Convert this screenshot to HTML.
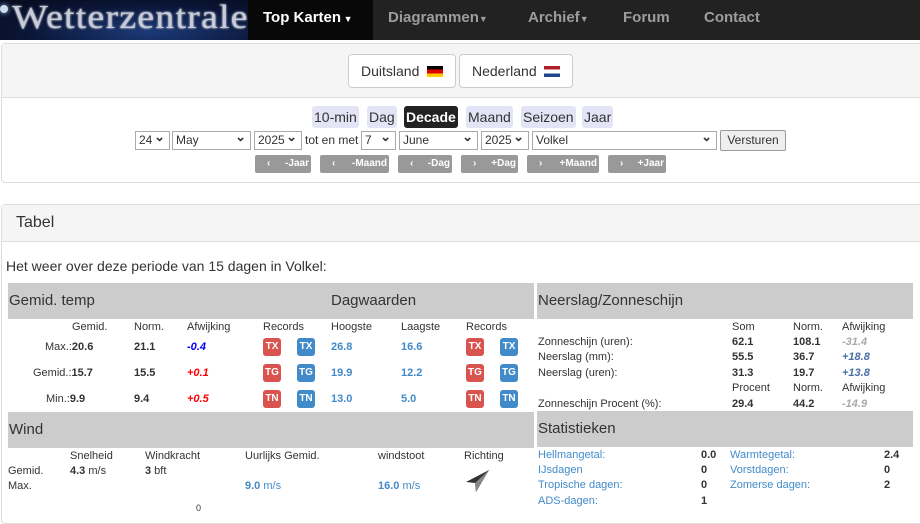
<!DOCTYPE html>
<html><head><meta charset="utf-8">
<style>
*{margin:0;padding:0;box-sizing:border-box}
body{width:920px;height:509px;overflow:hidden;background:#fff;font-family:"Liberation Sans",sans-serif;color:#333;position:relative;font-size:11px}
.a{position:absolute;white-space:nowrap;line-height:16px}
.b{font-weight:bold}
.bl{color:#428bca}
.bar{position:absolute;background:#ccc;font-size:15px;line-height:35px;padding-left:1px;color:#333}
.bd{position:absolute;width:18px;height:18px;border-radius:3px;color:#fff;font-weight:bold;font-size:10px;text-align:center;line-height:18px}
.r{background:#d9534f}.u{background:#428bca}
.sel{position:absolute;height:19px;border:1px solid #aaa;background:#fff;font-size:12px;line-height:17px;padding-left:3px;color:#333}
.sel:after{content:"⌄";position:absolute;right:4px;top:-4px;font-size:13px;font-weight:bold}
.pill{position:absolute;top:106px;height:22px;line-height:22px;font-size:14px;background:#e4e4f7;border-radius:3px;padding:0 2px;color:#333}
.nb{position:absolute;top:155px;height:18px;background:#999;border-radius:2px;color:#fff;font-size:10px;font-weight:bold;line-height:18px}
</style></head><body>
<!-- navbar -->
<div style="position:absolute;left:0;top:0;width:920px;height:40px;background:#222"></div>
<div style="position:absolute;left:0;top:0;width:248px;height:40px;background:radial-gradient(ellipse at 60% 80%,#1c3a78,#0a1535 60%,#050a1c);overflow:hidden">
<div class="a" style="left:12px;top:-2px;font-family:'Liberation Serif',serif;font-size:34px;line-height:40px;color:#c8ccd8;letter-spacing:1px;transform:scaleX(1.12);transform-origin:left;text-shadow:0 0 2px #fff">Wetterzentrale</div>
</div>
<div style="position:absolute;left:0;top:5px;width:8px;height:8px;border-radius:50%;background:#cde;box-shadow:0 0 6px #9cf"></div>
<div style="position:absolute;left:248px;top:0;width:125px;height:40px;background:#080808"></div>
<div class="a b" style="left:263px;top:8px;font-size:15px;line-height:20px;color:#fff">Top Karten<span style="font-size:9px"> ▼</span></div>
<div class="a b" style="left:388px;top:8px;font-size:15px;line-height:20px;color:#9d9d9d">Diagrammen<span style="font-size:9px">▼</span></div>
<div class="a b" style="left:528px;top:8px;font-size:15px;line-height:20px;color:#9d9d9d">Archief<span style="font-size:9px">▼</span></div>
<div class="a b" style="left:623px;top:8px;font-size:15px;line-height:20px;color:#9d9d9d">Forum</div>
<div class="a b" style="left:704px;top:8px;font-size:15px;line-height:20px;color:#9d9d9d">Contact</div>

<!-- top panel -->
<div style="position:absolute;left:1px;top:43px;width:925px;height:140px;border:1px solid #ddd;border-radius:4px;background:#fff"></div>
<div style="position:absolute;left:2px;top:44px;width:920px;height:54px;background:#f5f5f5;border-bottom:1px solid #ddd"></div>
<div style="position:absolute;left:348px;top:54px;width:108px;height:34px;border:1px solid #ccc;border-radius:4px;background:#fff"></div>
<div class="a" style="left:361px;top:62px;font-size:14px;line-height:18px">Duitsland</div>
<div style="position:absolute;left:427px;top:66px;width:16px;height:11px;background:linear-gradient(#000 33%,#d00 33% 66%,#fc0 66%)"></div>
<div style="position:absolute;left:459px;top:54px;width:114px;height:34px;border:1px solid #ccc;border-radius:4px;background:#fff"></div>
<div class="a" style="left:472px;top:62px;font-size:14px;line-height:18px">Nederland</div>
<div style="position:absolute;left:544px;top:66px;width:16px;height:11px;background:linear-gradient(#ae1c28 33%,#fff 33% 66%,#21468b 66%)"></div>

<div class="pill" style="left:312px">10-min</div>
<div class="pill" style="left:367px">Dag</div>
<div class="pill b" style="left:404px;background:#222;color:#fff">Decade</div>
<div class="pill" style="left:466px">Maand</div>
<div class="pill" style="left:521px">Seizoen</div>
<div class="pill" style="left:582px">Jaar</div>

<div class="sel" style="left:135px;top:131px;width:35px">24</div>
<div class="sel" style="left:172px;top:131px;width:79px">May</div>
<div class="sel" style="left:254px;top:131px;width:48px">2025</div>
<div class="a" style="left:305px;top:132px;font-size:12px">tot en met</div>
<div class="sel" style="left:361px;top:131px;width:35px">7</div>
<div class="sel" style="left:399px;top:131px;width:79px">June</div>
<div class="sel" style="left:481px;top:131px;width:48px">2025</div>
<div class="sel" style="left:532px;top:131px;width:185px">Volkel</div>
<div style="position:absolute;left:720px;top:130px;width:66px;height:21px;border:1px solid #999;border-radius:2px;background:#eee;font-size:12px;line-height:19px;text-align:center">Versturen</div>

<div class="nb" style="left:255px;width:56px"><span style="position:absolute;left:12px">‹</span><span style="position:absolute;right:2px">-Jaar</span></div>
<div class="nb" style="left:320px;width:69px"><span style="position:absolute;left:12px">‹</span><span style="position:absolute;right:2px">-Maand</span></div>
<div class="nb" style="left:398px;width:54px"><span style="position:absolute;left:12px">‹</span><span style="position:absolute;right:2px">-Dag</span></div>
<div class="nb" style="left:461px;width:57px"><span style="position:absolute;left:12px">›</span><span style="position:absolute;right:2px">+Dag</span></div>
<div class="nb" style="left:527px;width:72px"><span style="position:absolute;left:12px">›</span><span style="position:absolute;right:2px">+Maand</span></div>
<div class="nb" style="left:608px;width:58px"><span style="position:absolute;left:12px">›</span><span style="position:absolute;right:2px">+Jaar</span></div>

<!-- tabel panel -->
<div style="position:absolute;left:1px;top:204px;width:925px;height:320px;border:1px solid #ddd;border-radius:4px"></div>
<div style="position:absolute;left:2px;top:205px;width:920px;height:37px;background:#f5f5f5;border-bottom:1px solid #ddd"></div>
<div class="a" style="left:16px;top:213px;font-size:16px;line-height:20px">Tabel</div>
<div class="a" style="left:6px;top:257px;font-size:14px;line-height:18px">Het weer over deze periode van 15 dagen in Volkel:</div>

<div class="bar" style="left:8px;top:283px;width:526px;height:36px">Gemid. temp<span style="position:absolute;left:323px">Dagwaarden</span></div>
<div class="bar" style="left:537px;top:283px;width:376px;height:36px">Neerslag/Zonneschijn</div>
<div class="bar" style="left:8px;top:412px;width:526px;height:36px">Wind</div>
<div class="bar" style="left:537px;top:411px;width:376px;height:36px">Statistieken</div>

<!-- temp -->
<div class="a" style="left:72px;top:319px">Gemid.</div>
<div class="a" style="left:134px;top:319px">Norm.</div>
<div class="a" style="left:187px;top:319px">Afwijking</div>
<div class="a" style="left:263px;top:319px">Records</div>
<div class="a" style="left:331px;top:319px">Hoogste</div>
<div class="a" style="left:401px;top:319px">Laagste</div>
<div class="a" style="left:466px;top:319px">Records</div>

<div class="a" style="left:45px;top:339px">Max.:<b>20.6</b></div>
<div class="a b" style="left:134px;top:339px">21.1</div>
<div class="a b" style="left:187px;top:339px;color:#00f;font-style:italic">-0.4</div>
<div class="a" style="left:33px;top:365px">Gemid.:<b>15.7</b></div>
<div class="a b" style="left:134px;top:365px">15.5</div>
<div class="a b" style="left:187px;top:365px;color:#f00;font-style:italic">+0.1</div>
<div class="a" style="left:46px;top:391px">Min.:<b>9.9</b></div>
<div class="a b" style="left:134px;top:391px">9.4</div>
<div class="a b" style="left:187px;top:391px;color:#f00;font-style:italic">+0.5</div>

<div class="a b bl" style="left:331px;top:339px">26.8</div><div class="a b bl" style="left:401px;top:339px">16.6</div>
<div class="a b bl" style="left:331px;top:365px">19.9</div><div class="a b bl" style="left:401px;top:365px">12.2</div>
<div class="a b bl" style="left:331px;top:391px">13.0</div><div class="a b bl" style="left:401px;top:391px">5.0</div>

<div class="bd r" style="left:263px;top:338px">TX</div><div class="bd u" style="left:297px;top:338px">TX</div>
<div class="bd r" style="left:466px;top:338px">TX</div><div class="bd u" style="left:500px;top:338px">TX</div>
<div class="bd r" style="left:263px;top:364px">TG</div><div class="bd u" style="left:297px;top:364px">TG</div>
<div class="bd r" style="left:466px;top:364px">TG</div><div class="bd u" style="left:500px;top:364px">TG</div>
<div class="bd r" style="left:263px;top:390px">TN</div><div class="bd u" style="left:297px;top:390px">TN</div>
<div class="bd r" style="left:466px;top:390px">TN</div><div class="bd u" style="left:500px;top:390px">TN</div>

<!-- wind -->
<div class="a" style="left:70px;top:448px">Snelheid</div>
<div class="a" style="left:145px;top:448px">Windkracht</div>
<div class="a" style="left:245px;top:448px">Uurlijks Gemid.</div>
<div class="a" style="left:378px;top:448px">windstoot</div>
<div class="a" style="left:464px;top:448px">Richting</div>
<div class="a" style="left:8px;top:463px">Gemid.</div>
<div class="a" style="left:70px;top:463px"><b>4.3</b> m/s</div>
<div class="a" style="left:145px;top:463px"><b>3</b> bft</div>
<div class="a" style="left:8px;top:478px">Max.</div>
<div class="a bl" style="left:245px;top:478px"><b>9.0</b> m/s</div>
<div class="a bl" style="left:378px;top:478px"><b>16.0</b> m/s</div>
<svg style="position:absolute;left:464px;top:468px" width="28" height="26" viewBox="0 0 28 26"><path d="M25 2 L2 14 L11 15 L12 24 Z" fill="#333"/><path d="M25 2 L11 15 L12 24Z" fill="#888"/></svg>
<div class="a" style="left:196px;top:500px;font-size:9px">0</div>

<!-- neerslag -->
<div class="a" style="left:732px;top:319px">Som</div>
<div class="a" style="left:793px;top:319px">Norm.</div>
<div class="a" style="left:842px;top:319px">Afwijking</div>
<div class="a" style="left:538px;top:334px">Zonneschijn (uren):</div>
<div class="a b" style="left:732px;top:334px">62.1</div><div class="a b" style="left:793px;top:334px">108.1</div>
<div class="a b" style="left:842px;top:334px;color:#aaa;font-style:italic">-31.4</div>
<div class="a" style="left:538px;top:349px">Neerslag (mm):</div>
<div class="a b" style="left:732px;top:349px">55.5</div><div class="a b" style="left:793px;top:349px">36.7</div>
<div class="a b" style="left:842px;top:349px;color:#4a6fa5;font-style:italic">+18.8</div>
<div class="a" style="left:538px;top:365px">Neerslag (uren):</div>
<div class="a b" style="left:732px;top:365px">31.3</div><div class="a b" style="left:793px;top:365px">19.7</div>
<div class="a b" style="left:842px;top:365px;color:#4a6fa5;font-style:italic">+13.8</div>
<div class="a" style="left:732px;top:380px">Procent</div>
<div class="a" style="left:793px;top:380px">Norm.</div>
<div class="a" style="left:842px;top:380px">Afwijking</div>
<div class="a" style="left:538px;top:396px">Zonneschijn Procent (%):</div>
<div class="a b" style="left:732px;top:396px">29.4</div><div class="a b" style="left:793px;top:396px">44.2</div>
<div class="a b" style="left:842px;top:396px;color:#aaa;font-style:italic">-14.9</div>

<!-- stats -->
<div class="a bl" style="left:538px;top:447px">Hellmangetal:</div><div class="a b" style="left:701px;top:447px">0.0</div>
<div class="a bl" style="left:730px;top:447px">Warmtegetal:</div><div class="a b" style="left:884px;top:447px">2.4</div>
<div class="a bl" style="left:538px;top:462px">IJsdagen</div><div class="a b" style="left:701px;top:462px">0</div>
<div class="a bl" style="left:730px;top:462px">Vorstdagen:</div><div class="a b" style="left:884px;top:462px">0</div>
<div class="a bl" style="left:538px;top:477px">Tropische dagen:</div><div class="a b" style="left:701px;top:477px">0</div>
<div class="a bl" style="left:730px;top:477px">Zomerse dagen:</div><div class="a b" style="left:884px;top:477px">2</div>
<div class="a bl" style="left:538px;top:493px">ADS-dagen:</div><div class="a b" style="left:701px;top:493px">1</div>
</body></html>
